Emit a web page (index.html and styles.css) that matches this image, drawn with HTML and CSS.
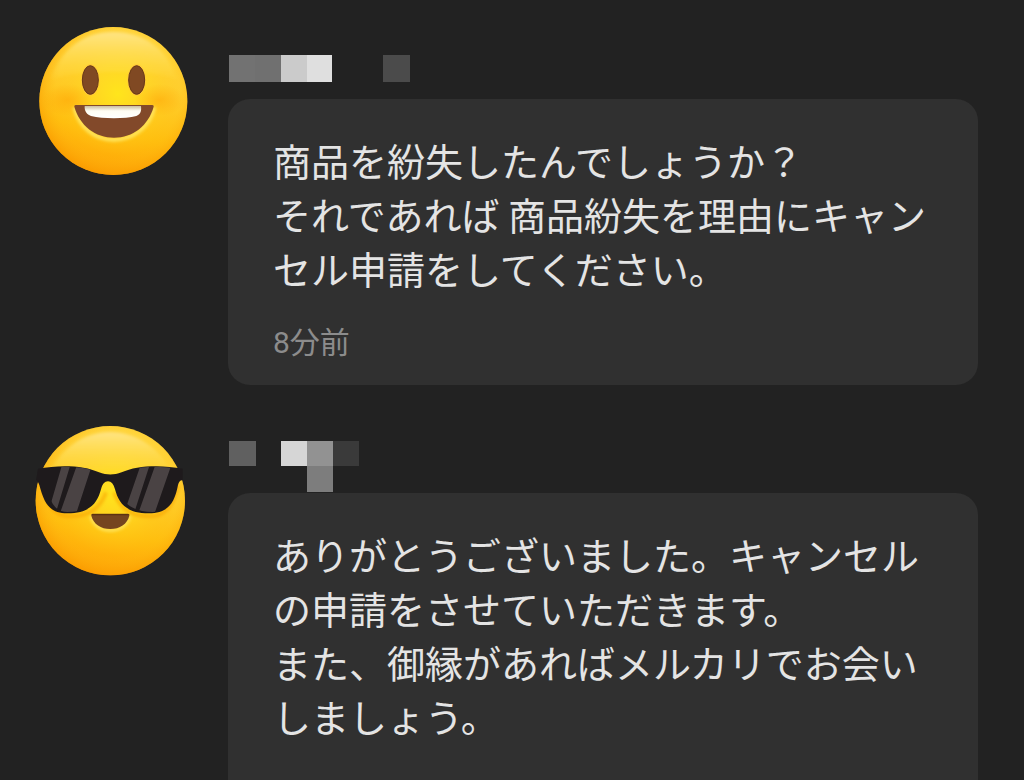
FILE: index.html
```
<!DOCTYPE html>
<html lang="ja">
<head>
  <meta charset="UTF-8">
  <meta name="viewport" content="width=device-width, initial-scale=1.0">
  <title>コメント</title>
  <link rel="stylesheet" href="styles.css">
</head>
<body>
  <ul class="comments">
    <li class="comment">
      <svg class="avatar" viewBox="24 33 516 510" aria-hidden="true">
        <defs>
          <linearGradient id="face" x1="0.6" y1="0" x2="0.4" y2="1">
            <stop offset="0" stop-color="#ffda45"/>
            <stop offset="0.4" stop-color="#ffd02e"/>
            <stop offset="0.7" stop-color="#ffbe0c"/>
            <stop offset="1" stop-color="#ff9c00"/>
          </linearGradient>
          <radialGradient id="edge" cx="0.53" cy="0.45" r="0.56">
            <stop offset="0" stop-color="#ffe51c"/>
            <stop offset="0.35" stop-color="#ffda20" stop-opacity="0.6"/>
            <stop offset="0.75" stop-color="#ffc01a" stop-opacity="0.2"/>
            <stop offset="1" stop-color="#f99b00" stop-opacity="0.75"/>
          </radialGradient>
          <linearGradient id="shine" x1="0" y1="0" x2="0" y2="1">
            <stop offset="0" stop-color="#ffe896" stop-opacity="0.8"/>
            <stop offset="1" stop-color="#ffe34a" stop-opacity="0.1"/>
          </linearGradient>
          <radialGradient id="cheek">
            <stop offset="0" stop-color="#ff9d00" stop-opacity="0.45"/>
            <stop offset="1" stop-color="#ff9d00" stop-opacity="0"/>
          </radialGradient>
          <linearGradient id="teeth" x1="0" y1="0" x2="0" y2="1">
            <stop offset="0" stop-color="#c9bda0"/>
            <stop offset="0.4" stop-color="#fffdf3"/>
            <stop offset="1" stop-color="#ffffff"/>
          </linearGradient>
          <filter id="soft" x="-20%" y="-20%" width="140%" height="140%">
            <feGaussianBlur stdDeviation="5"/>
          </filter>
        </defs>
        <circle cx="280" cy="273" r="222" fill="url(#face)"/>
        <circle cx="280" cy="273" r="222" fill="url(#edge)"/>
        <path d="M92 210C122 116 192 66 280 66s164 48 188 141c-60-28-320-28-376 3z" fill="url(#shine)" filter="url(#soft)"/>
        <ellipse cx="143" cy="270" rx="75" ry="48" fill="url(#cheek)"/>
        <ellipse cx="418" cy="270" rx="75" ry="48" fill="url(#cheek)"/>
        <path d="M163 292c16 62 62 97 118 97s106-35 122-97" fill="none" stroke="#ffe45c" stroke-width="12" filter="url(#soft)"/>
        <ellipse cx="211" cy="210" rx="28" ry="47" fill="#ffc83a"/>
        <ellipse cx="350" cy="210" rx="28" ry="47" fill="#ffc83a"/>
        <ellipse cx="211" cy="210" rx="24" ry="43" fill="#804923" stroke="#673817" stroke-width="3"/>
        <ellipse cx="350" cy="210" rx="24" ry="43" fill="#804923" stroke="#673817" stroke-width="3"/>
        <path d="M167 285h230q5 0 4 5c-16 57-63 93-119 93s-103-36-119-93q-1-5 4-5z" fill="#82492a"/>
        <path d="M194 288h169c2 16-2 25-14 30-34 9-100 9-136 0-13-5-20-14-19-30z" fill="url(#teeth)"/>
      </svg>
      <div class="body">
        <svg class="name" viewBox="0 0 200 78" shape-rendering="crispEdges" aria-hidden="true">
          <rect x="1" y="34" width="26" height="27" fill="#727272"/>
          <rect x="27" y="34" width="26" height="27" fill="#707070"/>
          <rect x="53" y="34" width="26" height="27" fill="#cbcbcb"/>
          <rect x="79" y="34" width="25" height="27" fill="#dfdfdf"/>
          <rect x="155" y="34" width="27" height="27" fill="#4b4b4b"/>
        </svg>
        <div class="bubble">
          <p class="text">商品を紛失したんでしょうか？<br>それであれば 商品紛失を理由にキャンセル申請をしてください。</p>
          <time class="time">8分前</time>
        </div>
      </div>
    </li>
    <li class="comment">
      <svg class="avatar" viewBox="24 15 516 510" aria-hidden="true">
        <defs>
          <clipPath id="lenses">
            <path d="M72 176c55-10 120-8 175 14 8 50-14 116-105 116-50 0-62-60-70-130zM293 190c55-22 120-24 175-14-8 70-20 130-70 130-91 0-113-66-105-116z"/>
          </clipPath>
        </defs>
        <circle cx="271" cy="272" r="224" fill="url(#face)"/>
        <circle cx="271" cy="272" r="224" fill="url(#edge)"/>
        <path d="M86 190C122 116 192 66 271 66s150 48 184 124z" fill="url(#shine)" filter="url(#soft)"/>
        <path d="M66 225c14 62 40 94 82 94 60 0 92-24 110-72M474 225c-14 62-40 94-82 94-60 0-92-24-110-72" fill="none" stroke="#f9a400" stroke-opacity="0.6" stroke-width="12" filter="url(#soft)"/>
        <path d="M213 318c6 27 30 43 58 43s52-16 58-43" fill="none" stroke="#ffe45c" stroke-width="9" filter="url(#soft)"/>
        <path d="M218 311h106q6 0 4 6c-6 25-29 40-57 40s-51-15-57-40q-2-6 4-6z" fill="#75451f"/>
        <path d="M216 312h110v4H216z" fill="#5c3212"/>
        <path d="M54 176c65-12 139-10 183 11 24 9 44 9 68 0 44-21 118-23 183-11v35q-10-2-14 14c-10 52-28 85-88 85-72 0-91-35-101-72-4-16-11-24-21-24s-17 8-21 24c-10 37-29 72-101 72-56 0-70-33-84-85q-6-16-10-14z" fill="#1e1a1c"/>
        <g clip-path="url(#lenses)" fill="#4a4344">
          <path d="M126 165h25L107 310H84zM171 165h45l-49 150h-49zM362 165h27l-47 145h-30zM406 165h48l-52 150h-49z"/>
        </g>
      </svg>
      <div class="body">
        <svg class="name" viewBox="0 0 200 78" shape-rendering="crispEdges" aria-hidden="true">
          <rect x="1" y="26" width="27" height="25" fill="#606060"/>
          <rect x="53" y="26" width="26" height="25" fill="#d6d6d6"/>
          <rect x="79" y="26" width="26" height="25" fill="#929292"/>
          <rect x="105" y="26" width="26" height="25" fill="#3a3a3a"/>
          <rect x="79" y="51" width="26" height="26" fill="#7d7d7d"/>
        </svg>
        <div class="bubble">
          <p class="text">ありがとうございました。キャンセルの申請をさせていただきます。<br>また、御縁があればメルカリでお会いしましょう。</p>
        </div>
      </div>
    </li>
  </ul>
</body>
</html>
```

FILE: styles.css
```
* {
  box-sizing: border-box;
}
body {
  margin: 0;
  background: #222222;
  color: #e4e4e4;
  font-family: Roboto, "Noto Sans CJK JP", sans-serif;
}
.comments {
  display: flex;
  flex-direction: column;
  gap: 30px;
  min-height: 100vh;
  margin: 0;
  padding: 21px 46px 0 28px;
  list-style: none;
}
.comment {
  display: flex;
  gap: 28px;
}
.avatar {
  flex: none;
  width: 172px;
  height: 170px;
}
.body {
  display: flex;
  flex: 1;
  flex-direction: column;
  min-width: 0;
}
.name {
  display: block;
  width: 200px;
  height: 78px;
}
.bubble {
  padding: 34px 45px 24px;
  background: #303030;
  border-radius: 22px;
}
.text {
  margin: 0;
  font-family: "Noto Sans CJK JP", sans-serif;
  font-size: 38px;
  line-height: 54px;
}
.time {
  display: block;
  margin-top: 30px;
  color: #8c8c8c;
  font-size: 30px;
  line-height: 36px;
}
/* the newest comment runs on to the bottom of the screen */
.comment:last-child {
  flex: 1;
}
.comment:last-child .bubble {
  flex: 1;
  border-radius: 22px 22px 0 0;
}
```
